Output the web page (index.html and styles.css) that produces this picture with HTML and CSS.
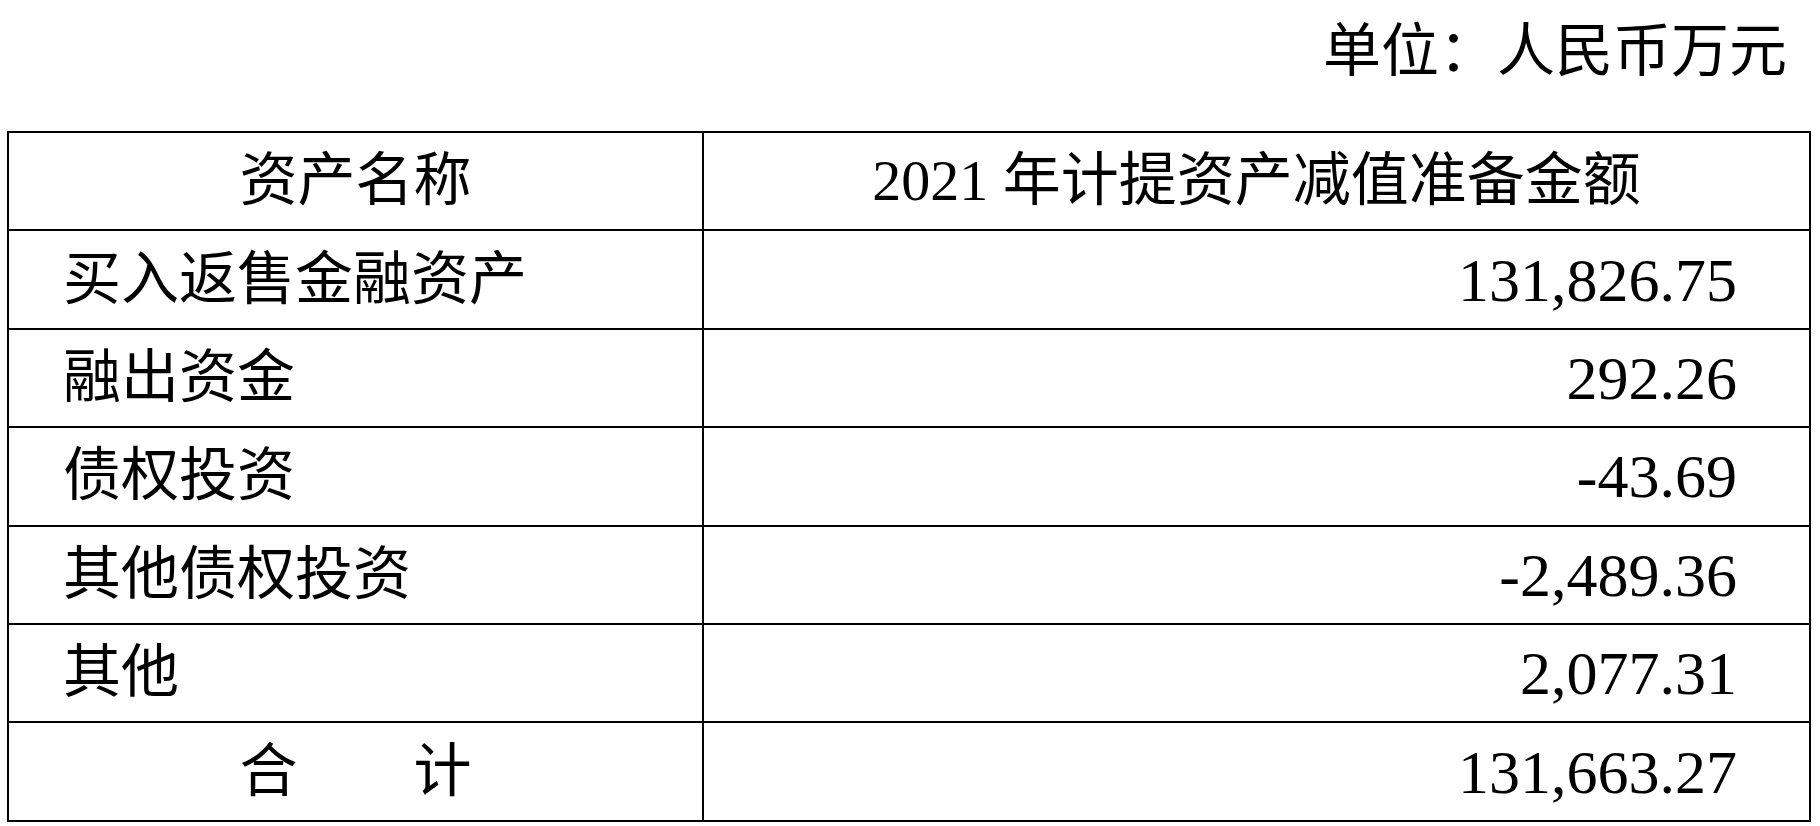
FILE: index.html
```html
<!DOCTYPE html>
<html lang="zh-CN">
<head>
<meta charset="utf-8">
<title>资产减值准备</title>
<link rel="stylesheet" href="styles.css">
</head>
<body>
<div class="unit">单位：人民币万元</div>
<table class="grid">
  <colgroup><col class="c1"><col class="c2"></colgroup>
  <tr class="head"><td class="center">资产名称</td><td class="center">2021 年计提资产减值准备金额</td></tr>
  <tr><td class="name">买入返售金融资产</td><td class="num">131,826.75</td></tr>
  <tr><td class="name">融出资金</td><td class="num">292.26</td></tr>
  <tr><td class="name">债权投资</td><td class="num">-43.69</td></tr>
  <tr><td class="name">其他债权投资</td><td class="num">-2,489.36</td></tr>
  <tr><td class="name">其他</td><td class="num">2,077.31</td></tr>
  <tr><td class="center">合　　计</td><td class="num">131,663.27</td></tr>
</table>
</body>
</html>
```
FILE: styles.css
```css
html, body {
  margin: 0;
  padding: 0;
  background: #fff;
}
body {
  font-family: "Liberation Serif", "Noto Sans CJK SC", serif;
  font-weight: 400;
  color: #000;
  font-size: 58px;
}
.unit {
  text-align: right;
  line-height: 58px;
  padding: 23px 33px 0 0;
  margin-bottom: 50px;
}
.grid {
  margin-left: 7px;
  width: 1804px;
  border-collapse: collapse;
  border: 2px solid #000;
  table-layout: fixed;
}
.c1 { width: 695px; }
.grid td {
  border: 2px solid #000;
  height: 96.4px;
  padding: 0;
  line-height: 58px;
  vertical-align: middle;
  white-space: nowrap;
}
.center { text-align: center; }
.name { padding-left: 54px !important; }
.num {
  text-align: right;
  padding-right: 72px !important;
  font-size: 62px;
}
```
